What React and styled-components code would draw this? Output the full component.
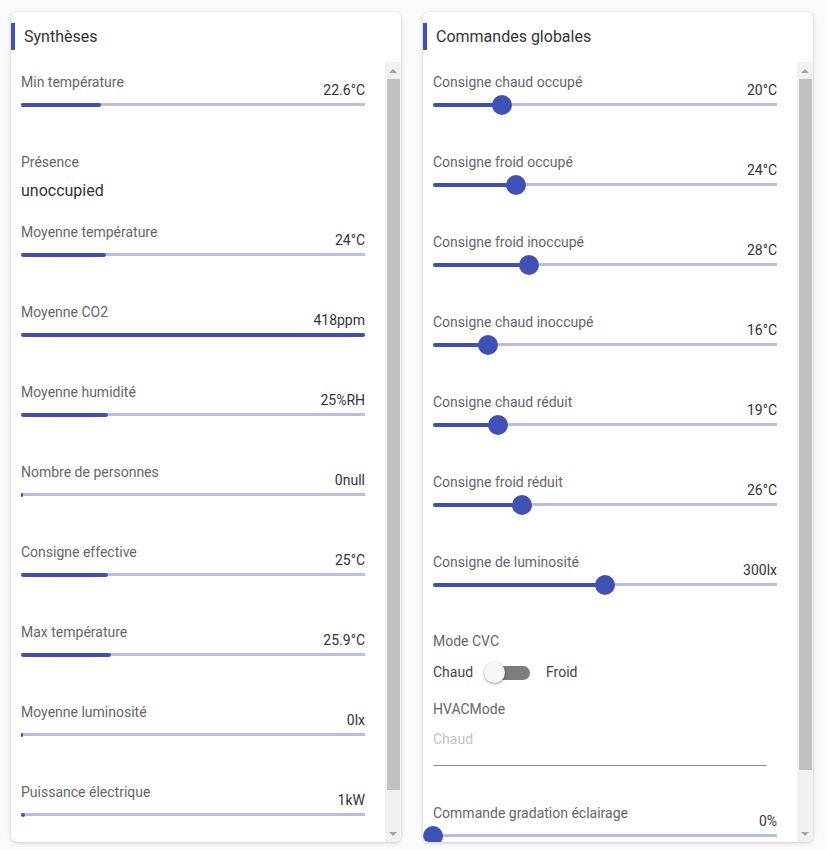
import styled, { createGlobalStyle } from 'styled-components';

const GlobalStyle = createGlobalStyle`
    html, body {
        margin: 0;
        padding: 0;
        background: #fafafa;
        font-family: Roboto, "Liberation Sans", Arial, sans-serif;
        overflow: hidden;
    }
`;

const Page = styled.div`
    display: flex;
    width: 826px;
    height: 850px;
    padding-left: 11px;
    box-sizing: border-box;
    overflow: hidden;
`;
const Card = styled.div`
    flex-shrink: 0;
    width: 390px;
    height: 830px;
    margin: 12px 22px 0 0;
    background: #fff;
    border-radius: 6px;
    box-shadow: 0 1px 4px rgba(0, 0, 0, 0.18), 0 0 1px rgba(0, 0, 0, 0.08);
    display: flex;
    flex-direction: column;
    overflow: hidden;

    &:last-of-type {
        margin-right: 1px;
    }
`;
const Title = styled.div`
    margin-top: 11px;
    height: 27px;
    line-height: 27px;
    border-left: 4px solid #3f51b5;
    padding-left: 9px;
    font-size: 16px;
    color: #333;
`;
const Body = styled.div`
    flex: 1;
    margin-top: 12px;
    display: flex;
    min-height: 0;
`;
const Content = styled.div`
    flex: 1;
    padding: 0 20px 0 10px;
    overflow: hidden;
`;
const ScrollBar = styled.div`
    width: 16px;
    flex-shrink: 0;
    background: #f1f1f1;
    display: flex;
    flex-direction: column;
`;
const Arrow = styled.div`
    height: 17px;
    display: flex;
    align-items: center;
    justify-content: center;

    &::after {
        content: "";
        border-left: 4px solid transparent;
        border-right: 4px solid transparent;
        ${props => props.$down
            ? 'border-top: 4px solid #a3a3a3;'
            : 'border-bottom: 4px solid #a3a3a3;'}
    }
`;
const ThumbTrack = styled.div`
    flex: 1;
`;
const Thumb = styled.div`
    height: ${props => props.$h}px;
    margin: 0 1px 0 2px;
    background: #c1c1c1;
`;

const Item = styled.div`
    box-sizing: border-box;
    height: ${props => props.$h || 80}px;
    padding-top: ${props => props.$pt || 10}px;
`;
const Label = styled.div`
    font-size: 14px;
    line-height: 20px;
    color: #666;
`;
const Value = styled.div`
    margin-top: -12px;
    font-size: 14px;
    line-height: 20px;
    color: #333;
    text-align: right;
`;
const BigValue = styled.div`
    margin-top: 7px;
    font-size: 16px;
    line-height: 24px;
    color: #333;
`;
const Rail = styled.div`
    position: relative;
    height: 3px;
    margin: 3px 0;
    background: #b7bfe7;
`;
const Fill = styled.div`
    position: absolute;
    left: 0;
    top: -0.5px;
    height: 4px;
    min-width: 2px;
    border-radius: ${props => props.$round ? '2px' : '1px'};
    background: #3f51b5;
`;
const Knob = styled.div`
    position: absolute;
    top: -8.5px;
    width: 20px;
    height: 20px;
    margin-left: -10px;
    border-radius: 50%;
    background: #3f51b5;
`;

const SwitchRow = styled.div`
    display: flex;
    align-items: center;
    height: 40px;
    margin-top: 1px;
    font-size: 14px;
    color: #444;
`;
const Switch = styled.div`
    position: relative;
    width: 46px;
    height: 21px;
    margin: 0 16px 0 11px;
`;
const SwitchTrack = styled.div`
    position: absolute;
    left: 6px;
    right: 0;
    top: 4px;
    height: 14px;
    border-radius: 7px;
    background: #7d7d7d;
`;
const SwitchThumb = styled.div`
    position: absolute;
    left: 0;
    top: 0;
    width: 21px;
    height: 21px;
    border-radius: 50%;
    background: #f7f7f7;
    box-shadow: 0 1px 3px rgba(0, 0, 0, 0.4);
`;
const SelectField = styled.div`
    width: 334px;
    margin-top: 10px;
    padding-bottom: 16px;
    border-bottom: 1px solid #949494;
    font-size: 14px;
    line-height: 20px;
    color: #c2c2c2;
`;
const Splitter = styled.div`
    position: relative;
    flex-shrink: 0;
    width: 5px;
    height: 850px;
    border-left: 4px solid #ececec;
    border-right: 3px solid #f7f7f7;
    background: #c1c1c1;

    &::after {
        content: "";
        position: absolute;
        left: 9px;
        top: 466px;
        width: 14px;
        height: 18px;
        border-radius: 50%;
        background: #fff;
        box-shadow: 0 0 2px rgba(0, 0, 0, 0.15);
    }
`;

const synth = [
    { label: 'Min température', value: '22.6°C', pct: 23.3 },
    { label: 'Présence', text: 'unoccupied' },
    { label: 'Moyenne température', value: '24°C', pct: 24.7 },
    { label: 'Moyenne CO2', value: '418ppm', pct: 100 },
    { label: 'Moyenne humidité', value: '25%RH', pct: 25.3 },
    { label: 'Nombre de personnes', value: '0null', pct: 0 },
    { label: 'Consigne effective', value: '25°C', pct: 25.3 },
    { label: 'Max température', value: '25.9°C', pct: 26.2 },
    { label: 'Moyenne luminosité', value: '0lx', pct: 0 },
    { label: 'Puissance électrique', value: '1kW', pct: 1.2 },
];

const commands = [
    { label: 'Consigne chaud occupé', value: '20°C', pct: 20 },
    { label: 'Consigne froid occupé', value: '24°C', pct: 24 },
    { label: 'Consigne froid inoccupé', value: '28°C', pct: 28 },
    { label: 'Consigne chaud inoccupé', value: '16°C', pct: 16 },
    { label: 'Consigne chaud réduit', value: '19°C', pct: 19 },
    { label: 'Consigne froid réduit', value: '26°C', pct: 26 },
    { label: 'Consigne de luminosité', value: '300lx', pct: 50 },
];

const Scroll = ({ thumb }) => (
    <ScrollBar>
        <Arrow />
        <ThumbTrack>
            <Thumb $h={thumb} />
        </ThumbTrack>
        <Arrow $down />
    </ScrollBar>
);

const SliderItem = ({ label, value, pct, h }) => (
    <Item $h={h}>
        <Label>{label}</Label>
        <Value>{value}</Value>
        <Rail>
            <Fill $round style={{ width: pct + '%' }} />
            <Knob style={{ left: pct + '%' }} />
        </Rail>
    </Item>
);

const App = () => {
    return (
        <>
            <GlobalStyle />
            <Page>
                <Card>
                    <Title>Synthèses</Title>
                    <Body>
                        <Content>
                            {synth.map(s => s.text ? (
                                <Item key={s.label} $h={70}>
                                    <Label>{s.label}</Label>
                                    <BigValue>{s.text}</BigValue>
                                </Item>
                            ) : (
                                <Item key={s.label}>
                                    <Label>{s.label}</Label>
                                    <Value>{s.value}</Value>
                                    <Rail>
                                        <Fill $round={s.pct > 0} style={{ width: s.pct + '%' }} />
                                    </Rail>
                                </Item>
                            ))}
                        </Content>
                        <Scroll thumb={711} />
                    </Body>
                </Card>
                <Card>
                    <Title>Commandes globales</Title>
                    <Body>
                        <Content>
                            {commands.map(c => (
                                <SliderItem key={c.label} {...c} />
                            ))}
                            <Item $h={171} $pt={9}>
                                <Label>Mode CVC</Label>
                                <SwitchRow>
                                    Chaud
                                    <Switch>
                                        <SwitchTrack />
                                        <SwitchThumb />
                                    </Switch>
                                    Froid
                                </SwitchRow>
                                <Label style={{ marginTop: 7 }}>HVACMode</Label>
                                <SelectField>Chaud</SelectField>
                            </Item>
                            <SliderItem label="Commande gradation éclairage" value="0%" pct={0} />
                        </Content>
                        <Scroll thumb={691} />
                    </Body>
                </Card>
                <Splitter />
            </Page>
        </>
    );
};

export default App;
